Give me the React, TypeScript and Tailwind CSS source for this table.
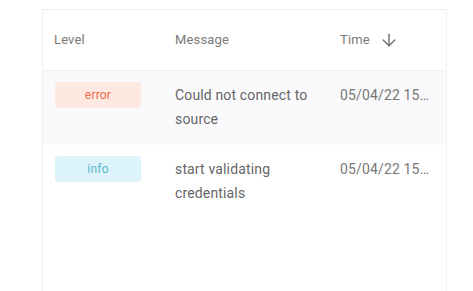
import React from "react";
import { ArrowDown } from "lucide-react";

const rows = [
  { level: "error", message: "Could not connect to source", time: "05/04/22 15:42:17" },
  { level: "info", message: "start validating credentials", time: "05/04/22 15:42:09" },
];

const Badge = ({ level }: { level: string }) =>
  level === "error" ? (
    <div className="w-[86px] h-[26px] rounded-[3px] bg-[#fde8e2] text-[#f26a4b] text-[12px] tracking-[0.2px] flex items-center justify-center">
      error
    </div>
  ) : (
    <div className="w-[86px] h-[26px] rounded-[3px] bg-[#dcf4fa] text-[#5fb7cb] text-[12px] tracking-[0.2px] flex items-center justify-center">
      info
    </div>
  );

export default function App() {
  return (
    <div className="w-[473px] h-[291px] bg-white overflow-hidden font-['Roboto',sans-serif] pt-[9px] pl-[42px]">
      <div className="w-[405px] h-[300px] border border-[#eeeff1] bg-white">
        {/* Header */}
        <div className="h-[61px] flex items-center border-b border-[#f0f1f3] text-[13px] tracking-[0.15px] text-[#7a7a7a]">
          <div className="w-[132px] pl-[11px]">Level</div>
          <div className="w-[165px]">Message</div>
          <div className="flex items-center gap-[9px]">
            <span>Time</span>
            <ArrowDown size={20} strokeWidth={1.7} className="text-[#707070]" />
          </div>
        </div>
        {rows.map((r, i) => (
          <div
            key={i}
            className={`flex pt-[11px] h-[74px] ${i === 0 ? "bg-[#fafafc]" : "bg-white"}`}
          >
            <div className="w-[132px] pl-[12px]">
              <Badge level={r.level} />
            </div>
            <div className="w-[165px] pr-[20px] mt-[1px] text-[14px] leading-[24px] tracking-[0.15px] text-[#666666]">
              {r.message}
            </div>
            <div className="w-[89px] mt-[1px] text-[14px] leading-[24px] tracking-[0.15px] text-[#777777] truncate">
              {r.time}
            </div>
          </div>
        ))}
      </div>
    </div>
  );
}
